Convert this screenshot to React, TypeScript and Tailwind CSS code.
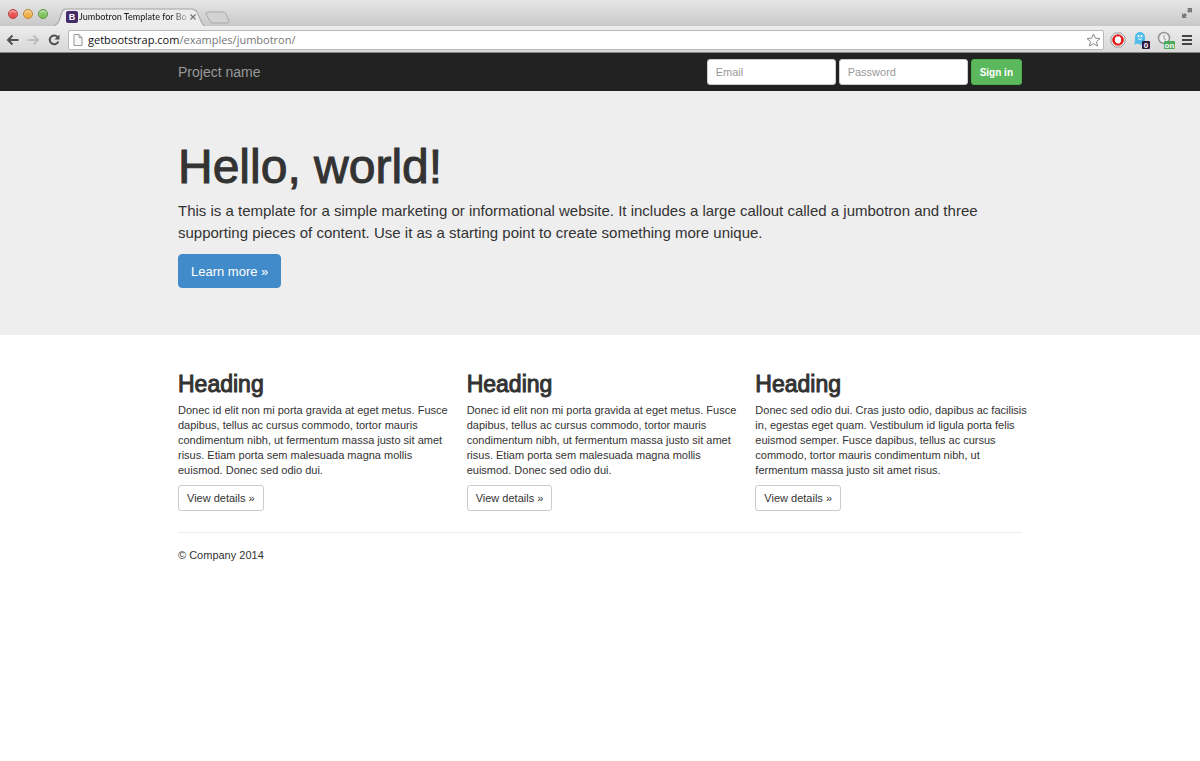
import type { ReactNode } from "react";

const columns = [
  "Donec id elit non mi porta gravida at eget metus. Fusce dapibus, tellus ac cursus commodo, tortor mauris condimentum nibh, ut fermentum massa justo sit amet risus. Etiam porta sem malesuada magna mollis euismod. Donec sed odio dui.",
  "Donec id elit non mi porta gravida at eget metus. Fusce dapibus, tellus ac cursus commodo, tortor mauris condimentum nibh, ut fermentum massa justo sit amet risus. Etiam porta sem malesuada magna mollis euismod. Donec sed odio dui.",
  "Donec sed odio dui. Cras justo odio, dapibus ac facilisis in, egestas eget quam. Vestibulum id ligula porta felis euismod semper. Fusce dapibus, tellus ac cursus commodo, tortor mauris condimentum nibh, ut fermentum massa justo sit amet risus.",
];

function WindowButton({ label, tone }: { label: string; tone: string }) {
  return (
    <button
      type="button"
      aria-label={label}
      className={`size-[10px] rounded-full border shadow-[inset_0_2px_2px_rgba(255,255,255,0.5)] ${tone}`}
    />
  );
}

function TabStrip() {
  return (
    <div className="flex h-[26px] items-end bg-linear-to-b from-[#e6e6e6] to-[#c8c8c8]">
      <div className="flex gap-[5px] self-center pt-[2px] pl-2">
        <WindowButton label="Close window" tone="border-[#b5403f] bg-[#e9514e]" />
        <WindowButton label="Minimize window" tone="border-[#bd8532] bg-[#f0ae46]" />
        <WindowButton label="Zoom window" tone="border-[#5b9440] bg-[#7fc35c]" />
      </div>
      <div className="relative ml-[6px] flex h-[18px] w-[151px] items-center pl-3">
        <svg className="absolute inset-0 size-full" viewBox="0 0 150 18" preserveAspectRatio="none" aria-hidden="true">
          <path d="M0 18C3 17 4 15 5 13L8 4Q9 1 12 1H137Q140 1 142 4L146 13Q147 17 150 18Z" fill="#ececec" />
          <path d="M0 18C3 17 4 15 5 13L8 4Q9 1 12 1H137Q140 1 142 4L146 13Q147 17 150 18" fill="none" stroke="#a6a6a6" />
        </svg>
        <span className="relative flex size-3 items-center justify-center rounded-xs bg-[#442a68] text-[9px] font-bold text-white">B</span>
        <span className="relative ml-px w-[108px] bg-linear-to-r from-[#222] from-85% to-[#22222240] bg-clip-text font-[Lato,sans-serif] text-[9px] leading-3 font-medium whitespace-nowrap text-transparent">
          Jumbotron Template for Bo
        </span>
        <button type="button" aria-label="Close tab" className="relative ml-[2px] flex size-2 items-center justify-center">
          <svg viewBox="0 0 8 8" className="size-2" aria-hidden="true">
            <path d="M1.500 1.500L6.500 6.500M6.500 1.500L1.500 6.500" stroke="#777" strokeWidth="1.300" />
          </svg>
        </button>
      </div>
      <button type="button" aria-label="New tab" className="mb-[2px]">
        <svg width="26" height="13" viewBox="0 0 26 13" aria-hidden="true">
          <path d="M3 1H18Q20 1 21 3L24 10Q24 12 22 12H8Q6 12 5 10L1 3Q1 1 3 1Z" fill="#d2d2d2" stroke="#a9a9a9" />
        </svg>
      </button>
      <button type="button" aria-label="Full screen" className="mr-[7px] ml-auto self-center">
        <svg width="12" height="12" viewBox="0 0 12 12" fill="#777" aria-hidden="true">
          <path d="M6 1H11V6L9.500 4.500L8 6L6 4L7.500 2.500ZM1 6L2.500 7.500L4 6L6 8L4.500 9.500L6 11H1Z" />
        </svg>
      </button>
    </div>
  );
}

function ToolButton({ label, children }: { label: string; children: ReactNode }) {
  return (
    <button type="button" aria-label={label} className="flex shrink-0 items-center justify-center">
      {children}
    </button>
  );
}

function Toolbar() {
  return (
    <div className="flex h-[27px] items-center border-b border-[#888] bg-linear-to-b from-[#ececec] to-[#d8d8d8] pt-[2px] pr-2 pl-[6px]">
      <div className="flex items-center gap-2">
        <ToolButton label="Back">
          <svg width="13" height="12" viewBox="0 0 13 12" fill="none" stroke="#505050" strokeWidth="2" aria-hidden="true">
            <path d="M12.500 6H2M6.500 1.500L2 6L6.500 10.500" />
          </svg>
        </ToolButton>
        <ToolButton label="Forward">
          <svg width="13" height="12" viewBox="0 0 13 12" fill="none" stroke="#bdbdbd" strokeWidth="2" aria-hidden="true">
            <path d="M0.500 6H11M6.500 1.500L11 6L6.500 10.500" />
          </svg>
        </ToolButton>
        <ToolButton label="Reload">
          <svg width="12" height="12" viewBox="0 0 12 12" aria-hidden="true">
            <path d="M9.500 3A4.400 4.400 0 1 0 10.300 7.500" fill="none" stroke="#505050" strokeWidth="2" />
            <path d="M11.500 0.500V5.500H6.500Z" fill="#505050" />
          </svg>
        </ToolButton>
      </div>
      <div className="ml-2 flex h-5 flex-1 items-center rounded-xs border border-[#b9b9b9] bg-white pr-[2px] pl-1">
        <svg width="10" height="12" viewBox="0 0 10 12" aria-hidden="true">
          <path d="M1 0.500H6L9 3.500V11.500H1ZM6 0.500V3.500H9" fill="#f8f8f8" stroke="#999" />
        </svg>
        <a href="#top" className="ml-[5px] flex-1 font-['Open_Sans',sans-serif] text-[11px] leading-4 text-[#777]">
          <span className="text-[#111]">getbootstrap.com</span>/examples/jumbotron/
        </a>
        <ToolButton label="Bookmark">
          <svg width="15" height="14" viewBox="0 0 15 14" aria-hidden="true">
            <path d="M7.500 1L9.400 5.200L14 5.600L10.500 8.600L11.600 13L7.500 10.700L3.400 13L4.500 8.600L1 5.600L5.600 5.200Z" fill="#fff" stroke="#888" />
          </svg>
        </ToolButton>
      </div>
      <div className="ml-[6px] flex items-center gap-[7px]">
        <ToolButton label="Content blocker">
          <svg width="16" height="16" viewBox="0 0 16 16" aria-hidden="true">
            <path d="M5 1H11L15 5V11L11 15H5L1 11V5Z" fill="#eee" stroke="#999" />
            <circle cx="8" cy="8" r="5.800" fill="#e01e1e" />
            <path d="M5 7.500V5.500H6V4.500H10V5.500H11V9.500L9.500 11.500H7L5 9.500Z" fill="#fff" />
          </svg>
        </ToolButton>
        <ToolButton label="Tracker blocker">
          <svg width="17" height="18" viewBox="0 0 17 18" aria-hidden="true">
            <path d="M2 6A5 5 0 0 1 12 6V11L13 13L10 12.500L7.500 14L5 12.500L1 13.500L2 11Z" fill="#52bde8" />
            <circle cx="5.500" cy="5" r="1.100" fill="#fff" />
            <circle cx="8.500" cy="5" r="1.100" fill="#fff" />
            <path d="M5 7.500Q7 9.500 9 7.500" fill="none" stroke="#fff" />
            <rect x="9" y="10" width="8" height="8" rx="1" fill="#301a3d" />
            <text x="13" y="17" textAnchor="middle" fontSize="8" fontWeight="bold" fontFamily="Liberation Sans" fill="#fff">0</text>
          </svg>
        </ToolButton>
        <ToolButton label="History switch">
          <svg width="18" height="18" viewBox="0 0 18 18" aria-hidden="true">
            <circle cx="7" cy="7" r="5.500" fill="#eee" stroke="#929292" strokeWidth="1.500" />
            <path d="M7 4V7.500L9 9" fill="none" stroke="#929292" />
            <rect x="7" y="10" width="11" height="8" rx="1" fill="#4ca95a" />
            <text x="12.500" y="16.500" textAnchor="middle" fontSize="8" fontWeight="bold" fontFamily="Liberation Sans" fill="#fff">on</text>
          </svg>
        </ToolButton>
        <ToolButton label="Menu">
          <svg width="10" height="10" viewBox="0 0 10 10" aria-hidden="true">
            <path d="M0 1H10M0 5H10M0 9H10" stroke="#444" strokeWidth="2" />
          </svg>
        </ToolButton>
      </div>
    </div>
  );
}

const field =
  "h-[26px] w-[129px] rounded-[3px] border border-[#ccc] bg-white px-2 text-[11px] text-[#555] placeholder:text-[#999]";

export default function App() {
  return (
    <div id="top" className="min-h-screen bg-white font-['Liberation_Sans',Arial,sans-serif] text-[11px] leading-[15px] text-[#333]">
      <header>
        <TabStrip />
        <Toolbar />
      </header>
      <nav className="bg-[#222]">
        <div className="mx-auto flex h-[38px] max-w-[844px] items-center justify-between">
          <a href="#top" className="text-sm text-[#999]">Project name</a>
          <form className="flex gap-[3px]" onSubmit={(e) => e.preventDefault()}>
            <input type="email" aria-label="Email" placeholder="Email" className={field} />
            <input type="password" aria-label="Password" placeholder="Password" className={field} />
            <button type="submit" className="h-[26px] rounded-[3px] border border-[#4cae4c] bg-[#5cb85c] px-2 text-[10px] font-bold text-white">
              Sign in
            </button>
          </form>
        </div>
      </nav>
      <section className="bg-[#eee]">
        <div className="mx-auto max-w-[844px] pt-[51px] pb-[47px]">
          <h1 className="text-5xl leading-[50px] [-webkit-text-stroke:1px]">Hello, world!</h1>
          <p className="mt-2 text-[15px] leading-[22px]">
            This is a template for a simple marketing or informational website. It includes a large callout called a jumbotron and three supporting pieces of content. Use it as a starting point to create something more unique.
          </p>
          <a href="#columns" className="mt-[10px] inline-flex h-[34px] items-center rounded-sm border border-[#428bca] bg-[#428bca] px-3 text-[13px] text-white">
            Learn more »
          </a>
        </div>
      </section>
      <main className="mx-auto max-w-[844px]">
        <div id="columns" className="grid grid-cols-3 gap-[22px] pt-9">
          {columns.map((text, i) => (
            <section key={i}>
              <h2 className="text-[23px] leading-[26px] [-webkit-text-stroke:1px]">Heading</h2>
              <p className="-mr-2 mt-[6px]">{text}</p>
              <a href="#columns" className="mt-[7px] inline-flex h-[26px] items-center rounded-[3px] border border-[#ccc] px-2">
                View details »
              </a>
            </section>
          ))}
        </div>
        <hr className="mt-[21px] border-[#eee]" />
        <footer className="pt-[15px]">© Company 2014</footer>
      </main>
    </div>
  );
}
